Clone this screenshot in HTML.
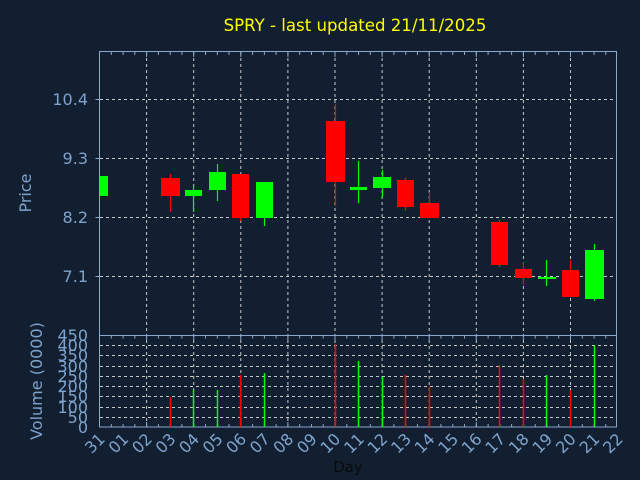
<!DOCTYPE html><html><head><style>html,body{margin:0;padding:0;background:#111f30}svg{display:block}text{font-family:"DejaVu Sans","Liberation Sans",sans-serif}</style></head><body>
<svg width="640" height="480" xmlns="http://www.w3.org/2000/svg">
<rect width="640" height="480" fill="#111f30"/>
<text x="355" y="31" fill="#ffff00" font-size="16.6" text-anchor="middle">SPRY - last updated 21/11/2025</text>
<g stroke="#c8c8c8" stroke-width="1" stroke-dasharray="3,3">
<path d="M146.6 52V427M193.7 52V427M240.8 52V427M287.9 52V427M335 52V427M382.1 52V427M429.2 52V427M476.3 52V427M523.4 52V427M570.5 52V427"/>
<path d="M100 99.5H617M100 158.5H617M100 217.5H617M100 276.5H617"/>
<path d="M100 345.5H617M100 355.5H617M100 366.5H617M100 376.5H617M100 386.5H617M100 396.5H617M100 407.5H617M100 417.5H617"/>
</g>
<g stroke="#8aa8cc" fill="none">
<rect x="99.5" y="51.5" width="517" height="375.5"/>
<path d="M99.5 335.5H616.5"/>
<path d="M99.5 99.5h-4M99.5 158.5h-4M99.5 217.5h-4M99.5 276.5h-4"/>
<path id="tk" d="M111.3 52v3M123.1 52v3M134.8 52v3M146.6 52v5M158.4 52v3M170.2 52v3M181.9 52v3M193.7 52v5M205.5 52v3M217.3 52v3M229 52v3M240.8 52v5M252.6 52v3M264.4 52v3M276.1 52v3M287.9 52v5M299.7 52v3M311.5 52v3M323.2 52v3M335 52v5M346.8 52v3M358.6 52v3M370.3 52v3M382.1 52v5M393.9 52v3M405.7 52v3M417.4 52v3M429.2 52v5M441 52v3M452.8 52v3M464.5 52v3M476.3 52v5M488.1 52v3M499.9 52v3M511.6 52v3M523.4 52v5M535.2 52v3M547 52v3M558.7 52v3M570.5 52v5M582.3 52v3M594.1 52v3M605.8 52v3"/>
<use href="#tk" y="283.5"/>
<use href="#tk" transform="translate(0,479) scale(1,-1)"/>
</g>
<g fill="#7fa3cc" font-size="16" text-anchor="end">
<text x="88" y="105">10.4</text><text x="88" y="164">9.3</text><text x="88" y="223">8.2</text><text x="88" y="282">7.1</text>
<text x="88" y="433">0</text><text x="88" y="423">50</text><text x="88" y="413">100</text><text x="88" y="402">150</text><text x="88" y="392">200</text><text x="88" y="382">250</text><text x="88" y="372">300</text><text x="88" y="361">350</text><text x="88" y="351">400</text><text x="88" y="341">450</text>
</g>
<text transform="translate(31,193) rotate(-90)" fill="#7fa3cc" font-size="16" text-anchor="middle">Price</text>
<text transform="translate(42,381) rotate(-90)" fill="#7fa3cc" font-size="16" text-anchor="middle">Volume (0000)</text>
<g fill="#7fa3cc" font-size="16" text-anchor="end">
<text transform="translate(106,440) rotate(-45)">31</text>
<text transform="translate(129.6,440) rotate(-45)">01</text>
<text transform="translate(153.1,440) rotate(-45)">02</text>
<text transform="translate(176.7,440) rotate(-45)">03</text>
<text transform="translate(200.2,440) rotate(-45)">04</text>
<text transform="translate(223.8,440) rotate(-45)">05</text>
<text transform="translate(247.3,440) rotate(-45)">06</text>
<text transform="translate(270.9,440) rotate(-45)">07</text>
<text transform="translate(294.4,440) rotate(-45)">08</text>
<text transform="translate(318,440) rotate(-45)">09</text>
<text transform="translate(341.5,440) rotate(-45)">10</text>
<text transform="translate(365.1,440) rotate(-45)">11</text>
<text transform="translate(388.6,440) rotate(-45)">12</text>
<text transform="translate(412.2,440) rotate(-45)">13</text>
<text transform="translate(435.7,440) rotate(-45)">14</text>
<text transform="translate(459.3,440) rotate(-45)">15</text>
<text transform="translate(482.8,440) rotate(-45)">16</text>
<text transform="translate(506.4,440) rotate(-45)">17</text>
<text transform="translate(529.9,440) rotate(-45)">18</text>
<text transform="translate(553.5,440) rotate(-45)">19</text>
<text transform="translate(577,440) rotate(-45)">20</text>
<text transform="translate(600.6,440) rotate(-45)">21</text>
<text transform="translate(624,440) rotate(-45)">22</text>
</g>
<text x="348" y="472" fill="#0a0a0a" font-size="15" text-anchor="middle">Day</text>
<g stroke-width="1.2">
<path stroke="#ff0000" d="M170.5 174V212M240.5 174V221M335.5 104V206M405.5 178V211M429.5 192V218M499.5 220V267M523.5 262V285M570.5 260V297"/>
<path stroke="#00ff00" d="M193.5 186V212M217.5 164V201M264.5 182V226M358.5 161V203M382.5 170V197M546.5 260V286M594.5 244V301"/>
</g>
<g fill="#ff0000">
<rect x="161" y="178" width="19" height="18"/><rect x="232" y="174" width="17" height="44"/><rect x="326" y="121" width="19" height="61"/><rect x="397" y="180" width="17" height="27"/><rect x="420" y="203" width="19" height="15"/><rect x="491" y="222" width="17" height="43"/><rect x="515" y="269" width="17" height="9"/><rect x="562" y="270" width="17" height="27"/>
</g>
<g fill="#00ff00">
<rect x="100" y="176" width="8" height="20"/><rect x="185" y="190" width="17" height="6"/><rect x="209" y="172" width="17" height="18"/><rect x="256" y="182" width="17" height="36"/><rect x="350" y="187" width="17" height="3"/><rect x="373" y="177" width="18" height="11"/><rect x="538" y="277" width="18" height="2"/><rect x="585" y="250" width="19" height="49"/>
</g>
<g stroke-width="1.5">
<path stroke="#ff0000" d="M170.5 397V427M240.5 375V427M335.5 344V427M405.5 375V427M429.5 387V427M499.5 365V427M523.5 379V427M570.5 390V427"/>
<path stroke="#00ff00" d="M193.5 390V427M217.5 390V427M264.5 373V427M358.5 361V427M382.5 377V427M546.5 375V427M594.5 346V427"/>
</g>
</svg>
</body></html>
